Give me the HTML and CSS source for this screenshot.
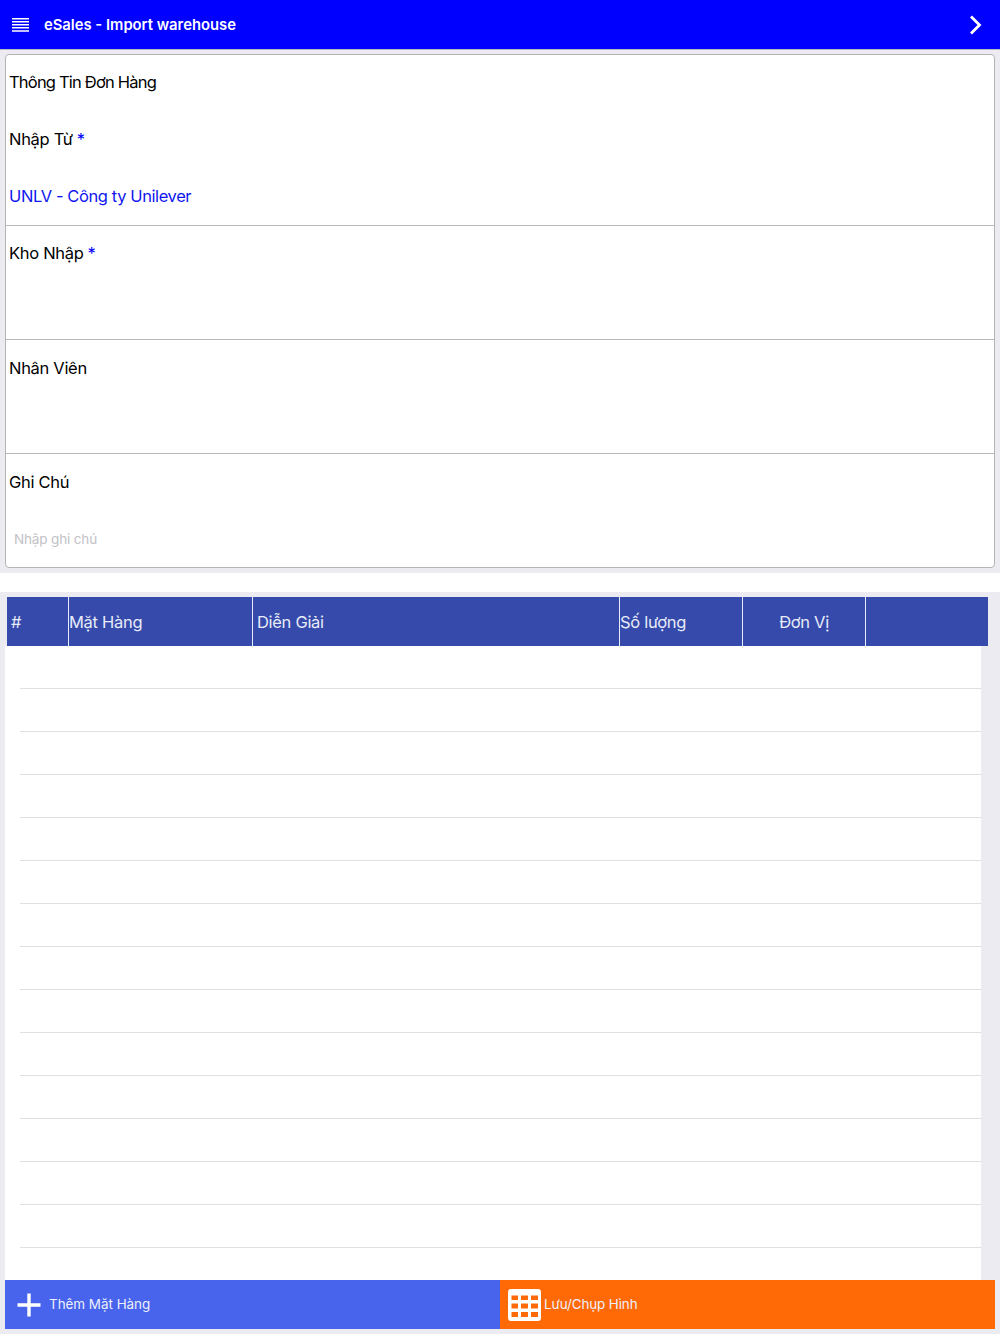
FILE: index.html
```html
<!DOCTYPE html>
<html lang="vi">
<head>
<meta charset="utf-8">
<title>eSales - Import warehouse</title>
<link rel="stylesheet" href="styles.css">
</head>
<body>
<div class="app">
  <header class="topbar">
    <svg class="menu-icon" width="17" height="14" viewBox="0 0 17 14"><path d="M0 .75h17M0 3.750h17M0 6.750h17M0 9.750h17M0 13h17" fill="none" stroke="#fff" stroke-width="1.5"/></svg>
    <h1 class="title">eSales - Import warehouse</h1>
    <svg class="next-icon" width="14" height="20" viewBox="0 0 14 20"><path d="M2 1.500l8.500 8.500-8.500 8.500" fill="none" stroke="#fff" stroke-width="2.8"/></svg>
  </header>

  <section class="form-wrap">
    <div class="card">
      <div class="group group-first">
        <div class="line line-title">Thông Tin Đơn Hàng</div>
        <div class="line">Nhập Từ <span class="req">*</span></div>
        <div class="line value">UNLV - Công ty Unilever</div>
      </div>
      <div class="group">
        <div class="line">Kho Nhập <span class="req">*</span></div>
      </div>
      <div class="group group-staff">
        <div class="line">Nhân Viên</div>
      </div>
      <div class="group group-note">
        <div class="line">Ghi Chú</div>
        <div class="line placeholder">Nhập ghi chú</div>
      </div>
    </div>
  </section>

  <div class="gap"></div>

  <section class="table-wrap">
    <div class="thead">
      <div class="th th-num">#</div>
      <div class="th th-item">Mặt Hàng</div>
      <div class="th th-desc">Diễn Giải</div>
      <div class="th th-qty">Số lượng</div>
      <div class="th th-unit">Đơn Vị</div>
      <div class="th th-end"></div>
    </div>
    <div class="list">
      <div class="row"></div><div class="row"></div><div class="row"></div>
      <div class="row"></div><div class="row"></div><div class="row"></div>
      <div class="row"></div><div class="row"></div><div class="row"></div>
      <div class="row"></div><div class="row"></div><div class="row"></div>
      <div class="row"></div><div class="row"></div><div class="row"></div>
    </div>
  </section>

  <footer class="actions">
    <div class="action action-add">
      <svg class="plus-icon" width="24" height="24" viewBox="0 0 24 24"><path d="M12 .5v23M.5 12h23" fill="none" stroke="#fff" stroke-width="3.4"/></svg>
      <span>Thêm Mặt Hàng</span>
    </div>
    <div class="action action-save">
      <svg class="grid-icon" width="33" height="32" viewBox="0 0 33 32"><path fill="#fff" fill-rule="evenodd" d="M3 0h27a3 3 0 0 1 3 3v26a3 3 0 0 1-3 3H3a3 3 0 0 1-3-3V3a3 3 0 0 1 3-3zM3.500 6.500V11H10V6.500zM13 6.500V11h7V6.500zM23 6.500V11h7V6.500zM3.500 14.500v5H10v-5zM13 14.500v5h7v-5zM23 14.500v5h7v-5zM3.500 23v5H10v-5zM13 23v5h7v-5zM23 23v5h7v-5z"/></svg>
      <span>Lưu/Chụp Hình</span>
    </div>
  </footer>
</div>
</body>
</html>
```

FILE: styles.css
```css
* { box-sizing: border-box; }
html, body { margin: 0; padding: 0; }
body {
  width: 1000px;
  height: 1334px;
  overflow: hidden;
  background: #ebebf1;
  font-family: Inter, "Noto Sans", sans-serif;
  color: #000;
}
.app { display: flex; flex-direction: column; height: 1334px; }
.topbar {
  height: 50px;
  flex: none;
  display: flex;
  align-items: center;
  padding: 0 17px 0 12px;
  background: #0000ff;
  border-bottom: 1px solid #b9b9c4;
}
.menu-icon { flex: none; margin-top: 1px; }
.title {
  margin: 0 0 0 15px;
  flex: 1;
  font-size: 14.800px;
  font-weight: 600;
  color: #fff;
}
.next-icon { flex: none; }

.form-wrap { height: 523px; flex: none; padding: 4px 5px 5px; }
.card {
  height: 514px;
  background: #fff;
  border: 1px solid #b4b4b4;
  border-radius: 4px;
}
.group { height: 114px; border-top: 1px solid #b8b8b8; padding-left: 3px; }
.group-first { height: 170px; border-top: 0; }
.group-staff { padding-top: 1px; }
.group-note { height: 114px; padding-top: 1px; }
.line {
  height: 57px;
  padding-bottom: 3px;
  display: flex;
  align-items: center;
  gap: 4px;
  font-size: 16.500px;
  letter-spacing: -0.3px;
}
.line-title { letter-spacing: -0.8px; }
.req { color: #0000ff; }
.value { color: #0f17f0; letter-spacing: -0.4px; }
.placeholder { padding-left: 5px; font-size: 13.500px; letter-spacing: -0.15px; color: #c2c2c6; }

.gap { height: 19px; flex: none; background: #fff; }

.table-wrap { flex: 1; min-height: 0; padding: 5px 0 0 5px; }
.thead {
  height: 49px;
  margin-left: 2px;
  width: 981px;
  display: flex;
  background: #354aab;
}
.th {
  display: flex;
  align-items: center;
  color: #e8ebf8;
  font-size: 16.500px;
  letter-spacing: -0.3px;
  border-right: 1px solid #e9ebf6;
}
.th-num { width: 62px; padding-left: 4px; }
.th-item { width: 184px; }
.th-desc { width: 367px; padding-left: 4px; }
.th-qty { width: 123px; }
.th-unit { width: 123px; justify-content: center; }
.th-end { flex: 1; border-right: 0; }
.list {
  width: 976px;
  height: 634px;
  background: #fff;
  padding-left: 15px;
}
.row { height: 43px; border-bottom: 1px solid #dfdfe2; }

.actions {
  height: 54px;
  flex: none;
  display: flex;
  padding: 0 5px 5px;
}
.action {
  flex: 0 0 50%;
  display: flex;
  align-items: center;
  color: #eef0fb;
  font-size: 13.400px;
}
.action span { padding-bottom: 1px; }
.action-add { background: #4864ec; padding-left: 12px; gap: 8px; }
.action-save { background: #ff6a07; padding-left: 8px; gap: 3px; letter-spacing: -0.1px; }
.plus-icon, .grid-icon { flex: none; }
```
